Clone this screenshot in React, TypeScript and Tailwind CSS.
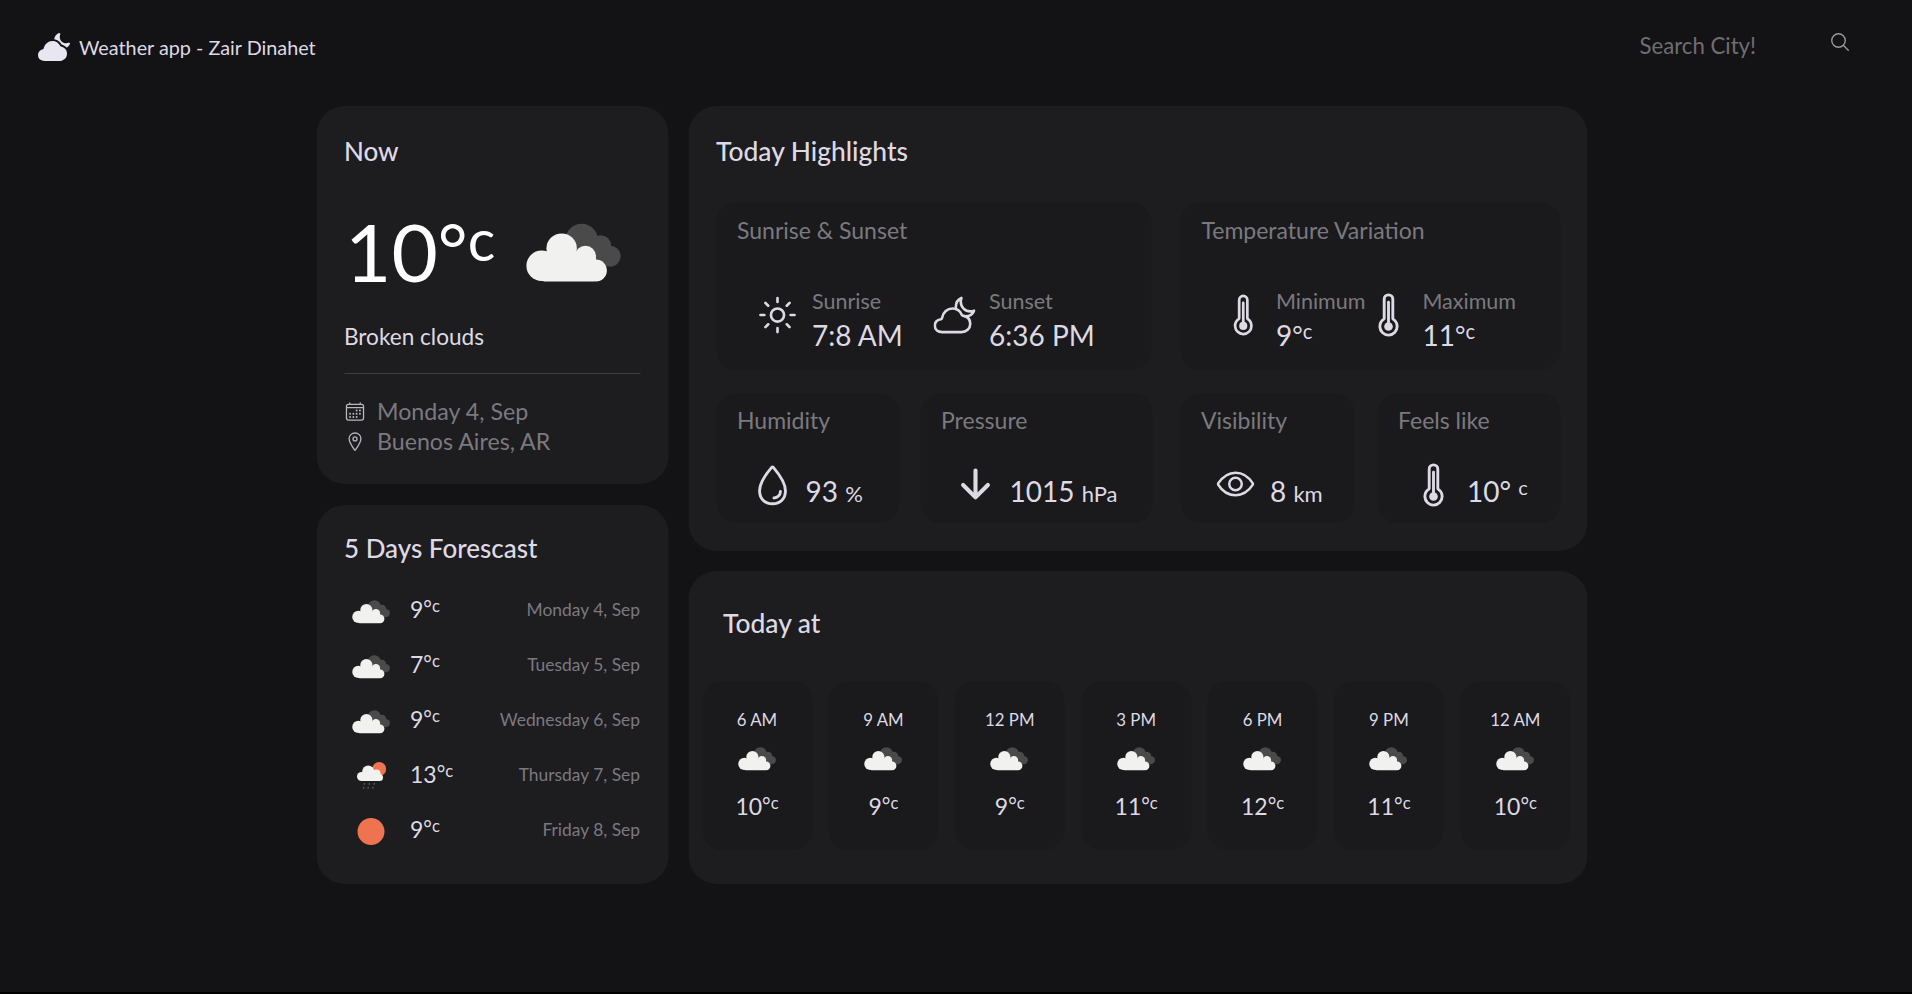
import React from "react";
import { IoCloudyNight, IoSearchOutline, IoCalendarOutline, IoLocationOutline, IoSunnyOutline, IoCloudyNightOutline, IoThermometerOutline, IoWaterOutline, IoArrowDownOutline, IoEyeOutline } from "react-icons/io5";

const font = "font-['Lato','Open_Sans',sans-serif]";

function Clouds({ w = 105 }: { w?: number }) {
  return (
    <svg width={w} height={(w * 68) / 105} viewBox="0 0 105 68" aria-hidden="true">
      <g fill="#4a4a4b">
        <circle cx="60" cy="20" r="17" />
        <circle cx="80" cy="26" r="11" />
        <circle cx="90" cy="37" r="11" />
        <rect x="55" y="25" width="30" height="24" />
      </g>
      <g fill="#f1f1ef">
        <circle cx="39" cy="29" r="16" />
        <circle cx="18" cy="47" r="16" />
        <circle cx="64" cy="37" r="11" />
        <circle cx="75" cy="52" r="11.5" />
        <rect x="18" y="34" width="57" height="29.5" rx="3" />
      </g>
    </svg>
  );
}

function RainIcon() {
  return (
    <svg width="30" height="29" viewBox="0 0 30 29" aria-hidden="true">
      <circle cx="22.7" cy="7" r="7" fill="#ee7350" />
      <g fill="#f1f1ef">
        <circle cx="11.7" cy="9.5" r="6" />
        <circle cx="5" cy="14.5" r="4.5" />
        <circle cx="20" cy="11.5" r="4" />
        <circle cx="23" cy="15.5" r="3.5" />
        <rect x="5" y="11" width="18" height="8" />
      </g>
      <g stroke="#5a5a5a" strokeWidth="1.2" strokeDasharray="2 2">
        <line x1="8" y1="21" x2="7" y2="27" />
        <line x1="13" y1="21" x2="11" y2="28" />
        <line x1="18" y1="21" x2="16" y2="27" />
      </g>
    </svg>
  );
}

function Deg() {
  return (
    <>
      <span className="relative top-[-0.08em] text-[0.9em] leading-none">°</span>
      <span className="relative top-[-0.36em] text-[0.72em] leading-none">c</span>
    </>
  );
}

function SmallCard({ title, className, children }: { title: string; className: string; children: React.ReactNode }) {
  return (
    <div className={`rounded-[20px] bg-black/10 pl-[21px] ${className}`}>
      <div className="text-[23px] leading-[30px] text-[#7b7980]">{title}</div>
      {children}
    </div>
  );
}

function Pair({ icon, label, value, gap, width }: { icon: React.ReactNode; label: string; value: React.ReactNode; gap: string; width: string }) {
  return (
    <div className={`flex items-center ${gap} ${width}`}>
      {icon}
      <div className="translate-y-[6px]">
        <div className="text-[21.5px] leading-[28px] text-[#7b7980]">{label}</div>
        <div className="text-[28px] leading-[40px] text-[#dddae5]">{value}</div>
      </div>
    </div>
  );
}

const forecast = [
  ["9", "Monday 4, Sep", "cloud"],
  ["7", "Tuesday 5, Sep", "cloud"],
  ["9", "Wednesday 6, Sep", "cloud"],
  ["13", "Thursday 7, Sep", "rain"],
  ["9", "Friday 8, Sep", "sun"],
];

const hours = [
  ["6 AM", "10"],
  ["9 AM", "9"],
  ["12 PM", "9"],
  ["3 PM", "11"],
  ["6 PM", "12"],
  ["9 PM", "11"],
  ["12 AM", "10"],
];

export default function App() {
  return (
    <div className="h-[994px] bg-black">
    <div className={`h-[992px] overflow-hidden bg-[#131214] text-[#dddae5] ${font}`}>
      <header className="flex h-[106px] items-start justify-between pl-[38px] pr-[61px] pt-[31px]">
        <div className="flex items-center gap-[9px]">
          <IoCloudyNight size={32} className="text-[#e8e6f0]" />
          <span className="text-[19.8px] leading-[32px]">Weather app - Zair Dinahet</span>
        </div>
        <div className="flex items-start">
          <span className="translate-y-[1px] text-[22.2px] leading-[28px] text-[#6f6e73]">Search City!</span>
          <IoSearchOutline size={22} className="ml-[73px] text-[#9a999d]" />
        </div>
      </header>
      <main className="mx-auto flex w-[1271px] -translate-x-[4.5px] gap-[20px]">
        <div className="flex w-[352px] flex-col gap-[21px]">
          <section className="h-[378px] rounded-[28px] bg-[#1d1c1f] pl-[28px] pr-[28px] pt-[29px]">
            <h2 className="text-[26px] leading-[32px] font-medium">Now</h2>
            <div className="mt-[40px] flex h-[88px] items-center justify-between pl-[1px] pr-[16px]">
              <div className="text-[80px] leading-[88px] text-white">10<Deg /></div>
              <div className="mt-[4px]"><Clouds w={100} /></div>
            </div>
            <div className="mt-[27px] text-[22.6px] leading-[30px]">Broken clouds</div>
            <div className="mt-[21px] border-t border-[#3e3d40]" />
            <div className="mt-[22px] flex items-center gap-[12px] text-[23.2px] leading-[30px] text-[#7b7980]">
              <IoCalendarOutline size={21} className="text-[#b9b6bf]" /> Monday 4, Sep
            </div>
            <div className="flex items-center gap-[12px] text-[23.2px] leading-[30px] text-[#7b7980]">
              <IoLocationOutline size={21} className="text-[#b9b6bf]" /> Buenos Aires, AR
            </div>
          </section>
          <section className="h-[379px] rounded-[28px] bg-[#1d1c1f] pl-[28px] pr-[28px] pt-[27px]">
            <h2 className="text-[26px] leading-[32px] font-medium">5 Days Forescast</h2>
            <ul className="mt-[20px]">
              {forecast.map(([t, d, k]) => (
                <li key={d} className="flex h-[55px] items-center">
                  <div className="flex w-[66px] justify-center pr-[12px]">
                    {k === "cloud" && <Clouds w={40} />}
                    {k === "rain" && <RainIcon />}
                    {k === "sun" && <div className="h-[27px] w-[27px] rounded-full bg-[#ee7350]" />}
                  </div>
                  <div className="text-[23px] leading-[30px] -translate-y-[3px]">{t}<Deg /></div>
                  <div className="ml-auto -translate-y-[1px] text-[17.4px] text-[#7b7980]">{d}</div>
                </li>
              ))}
            </ul>
          </section>
        </div>
        <div className="flex w-[899px] flex-col gap-[20px]">
          <section className="h-[445px] rounded-[28px] bg-[#1d1c1f] pl-[28px] pr-[27px] pt-[29px]">
            <h2 className="text-[26.4px] leading-[32px] font-medium">Today Highlights</h2>
            <div className="mt-[35px] flex gap-[29px]">
              <SmallCard title="Sunrise & Sunset" className="h-[168px] w-[436px] pt-[13px]">
                <div className="mt-[36px] flex pl-[19px]">
                  <Pair gap="gap-[14px]" width="w-[177px]" icon={<IoSunnyOutline size={42} />} label="Sunrise" value="7:8 AM" />
                  <Pair gap="gap-[14px]" width="w-[180px]" icon={<IoCloudyNightOutline size={42} />} label="Sunset" value="6:36 PM" />
                </div>
              </SmallCard>
              <SmallCard title="Temperature Variation" className="h-[168px] w-[380px] pt-[13px]">
                <div className="mt-[36px] flex pl-[20px]">
                  <Pair gap="gap-[11px]" width="w-[144px]" icon={<IoThermometerOutline size={46} />} label="Minimum" value={<>9<Deg /></>} />
                  <Pair gap="gap-[11px]" width="w-[160px]" icon={<IoThermometerOutline size={46} />} label="Maximum" value={<>11<Deg /></>} />
                </div>
              </SmallCard>
            </div>
            <div className="mt-[23px] flex">
              <SmallCard title="Humidity" className="h-[130px] w-[183px] pt-[12px]">
                <div className="mt-[34px] flex h-[46px] items-center gap-[10.5px] pl-[12px] text-[28px] leading-[36px]">
                  <IoWaterOutline size={46} className="-translate-y-[7px]" /> <span>93 <span className="text-[22px]">%</span></span>
                </div>
              </SmallCard>
              <SmallCard title="Pressure" className="ml-[21px] h-[130px] w-[232px] pt-[12px]">
                <div className="mt-[34px] flex h-[46px] items-center gap-[12.5px] pl-[12px] text-[28px] leading-[36px]">
                  <IoArrowDownOutline size={44} className="-translate-y-[8px]" /> <span>1015 <span className="text-[22px]">hPa</span></span>
                </div>
              </SmallCard>
              <SmallCard title="Visibility" className="ml-[28px] h-[130px] w-[174px] pt-[12px]">
                <div className="mt-[34px] flex h-[46px] items-center gap-[15px] pl-[14px] text-[28px] leading-[36px]">
                  <IoEyeOutline size={40} className="-translate-y-[8px]" /> <span>8 <span className="text-[22px]">km</span></span>
                </div>
              </SmallCard>
              <SmallCard title="Feels like" className="ml-[23px] h-[130px] w-[183px] pt-[12px]">
                <div className="mt-[34px] flex h-[46px] items-center gap-[11px] pl-[12px] text-[28px] leading-[36px]">
                  <IoThermometerOutline size={46} className="-translate-y-[7px]" /> <span>10° <span className="relative top-[-0.35em] text-[20px]">c</span></span>
                </div>
              </SmallCard>
            </div>
          </section>
          <section className="h-[313px] rounded-[28px] bg-[#1d1c1f] pl-[14px] pt-[34px]">
            <h2 className="pl-[21px] text-[26.4px] leading-[36px] font-medium">Today at</h2>
            <div className="mt-[40px] flex gap-[16.4px]">
              {hours.map(([h, t]) => (
                <div key={h} className="flex h-[169px] w-[110px] flex-col items-center rounded-[20px] bg-black/10 pt-[27px]">
                  <div className="text-[16.8px] leading-[24px]">{h}</div>
                  <div className="mt-[14px]"><Clouds w={40} /></div>
                  <div className="mt-[19px] text-[23px] leading-[30px]">{t}<Deg /></div>
                </div>
              ))}
            </div>
          </section>
        </div>
      </main>
    </div>
    </div>
  );
}
